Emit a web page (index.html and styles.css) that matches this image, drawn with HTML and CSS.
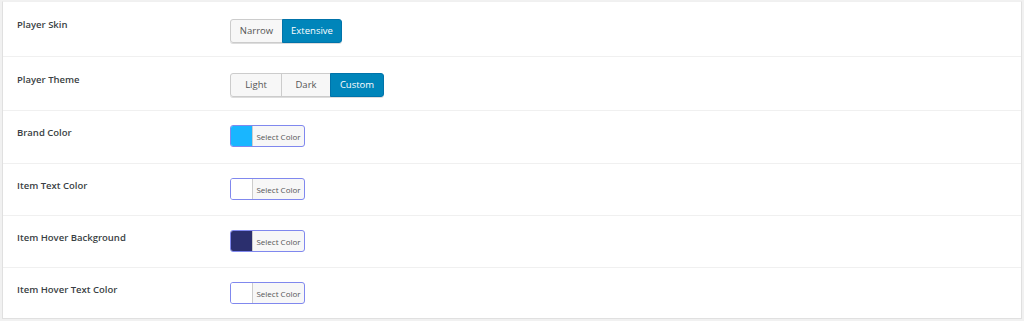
FILE: index.html
```html
<!DOCTYPE html>
<html>
<head>
<meta charset="utf-8">
<link rel="stylesheet" href="styles.css">
</head>
<body>
<div class="panel">
  <div class="row row-btn r1">
    <div class="label">Player Skin</div>
    <div class="field">
      <div class="group">
        <span class="seg w-narrow">Narrow</span><span class="seg active w-ext">Extensive</span>
      </div>
    </div>
  </div>
  <div class="row row-btn r2">
    <div class="label">Player Theme</div>
    <div class="field">
      <div class="group">
        <span class="seg w-light">Light</span><span class="seg w-dark">Dark</span><span class="seg active w-custom">Custom</span>
      </div>
    </div>
  </div>
  <div class="row row-col r3">
    <div class="label">Brand Color</div>
    <div class="field">
      <div class="picker"><span class="swatch sw-brand"></span><span class="pick-text">Select Color</span></div>
    </div>
  </div>
  <div class="row row-col r4">
    <div class="label">Item Text Color</div>
    <div class="field">
      <div class="picker"><span class="swatch sw-white"></span><span class="pick-text">Select Color</span></div>
    </div>
  </div>
  <div class="row row-col r5">
    <div class="label">Item Hover Background</div>
    <div class="field">
      <div class="picker"><span class="swatch sw-navy"></span><span class="pick-text">Select Color</span></div>
    </div>
  </div>
  <div class="row row-col r6 last">
    <div class="label">Item Hover Text Color</div>
    <div class="field">
      <div class="picker"><span class="swatch sw-white"></span><span class="pick-text">Select Color</span></div>
    </div>
  </div>
</div>
</body>
</html>
```

FILE: styles.css
```css
* { box-sizing: border-box; }
html, body { margin: 0; padding: 0; background: #f1f1f1; }
body {
  font-family: "Open Sans", "Noto Sans", sans-serif;
  width: 1024px;
  height: 321px;
  overflow: hidden;
  padding-top: 1px;
}
.panel {
  margin-left: 2px;
  width: 1020px;
  background: #fff;
  border: 1px solid #e0e0e0;
  border-top-color: #f0f0f0;
}
.row {
  display: flex;
  border-bottom: 1px solid #f0f0f0;
}
.row.last { border-bottom: none; }
.r1 { height: 55px; }
.r2 { height: 54px; }
.r3 { height: 53px; }
.r4 { height: 52px; }
.r5 { height: 52px; }
.r6 { height: 50px; }
.label {
  width: 227px;
  padding-left: 14px;
  font-size: 9.5px;
  font-weight: 600;
  color: #3a3f44;
}
.row-btn .label { padding-top: 16px; }
.row-col .label { padding-top: 15px; }
.field { padding-top: 14px; }
.r1 .field { padding-top: 15px; }
.group {
  display: inline-flex;
  border-radius: 3px;
  box-shadow: 0 1px 0 #ddd;
}
.seg {
  display: flex;
  align-items: center;
  justify-content: center;
  height: 24px;
  font-size: 9.5px;
  color: #555;
  background: #f7f7f7;
  border: 1px solid #ccc;
  margin-left: -1px;
}
.seg:first-child { margin-left: 0; border-radius: 3px 0 0 3px; }
.seg:last-child { border-radius: 0 3px 3px 0; }
.seg.active {
  background: #0085ba;
  border-color: #0073aa;
  color: #fff;
}
.w-narrow { width: 53px; }
.w-ext { width: 60px; }
.w-light { width: 52px; }
.w-dark { width: 50px; }
.w-custom { width: 54px; }
.picker {
  display: inline-flex;
  height: 22px;
  width: 75px;
  border: 1px solid #8088ee;
  border-radius: 3px;
  overflow: hidden;
  background: #f7f7f7;
}
.swatch {
  width: 22px;
  height: 100%;
  border-right: 1px solid #ccc;
}
.sw-brand { background: #19b6ff; }
.sw-white { background: #fff; }
.sw-navy { background: #2b2f6e; }
.pick-text {
  flex: 1;
  display: flex;
  align-items: center;
  justify-content: center;
  font-size: 8px;
  color: #555;
}
```
